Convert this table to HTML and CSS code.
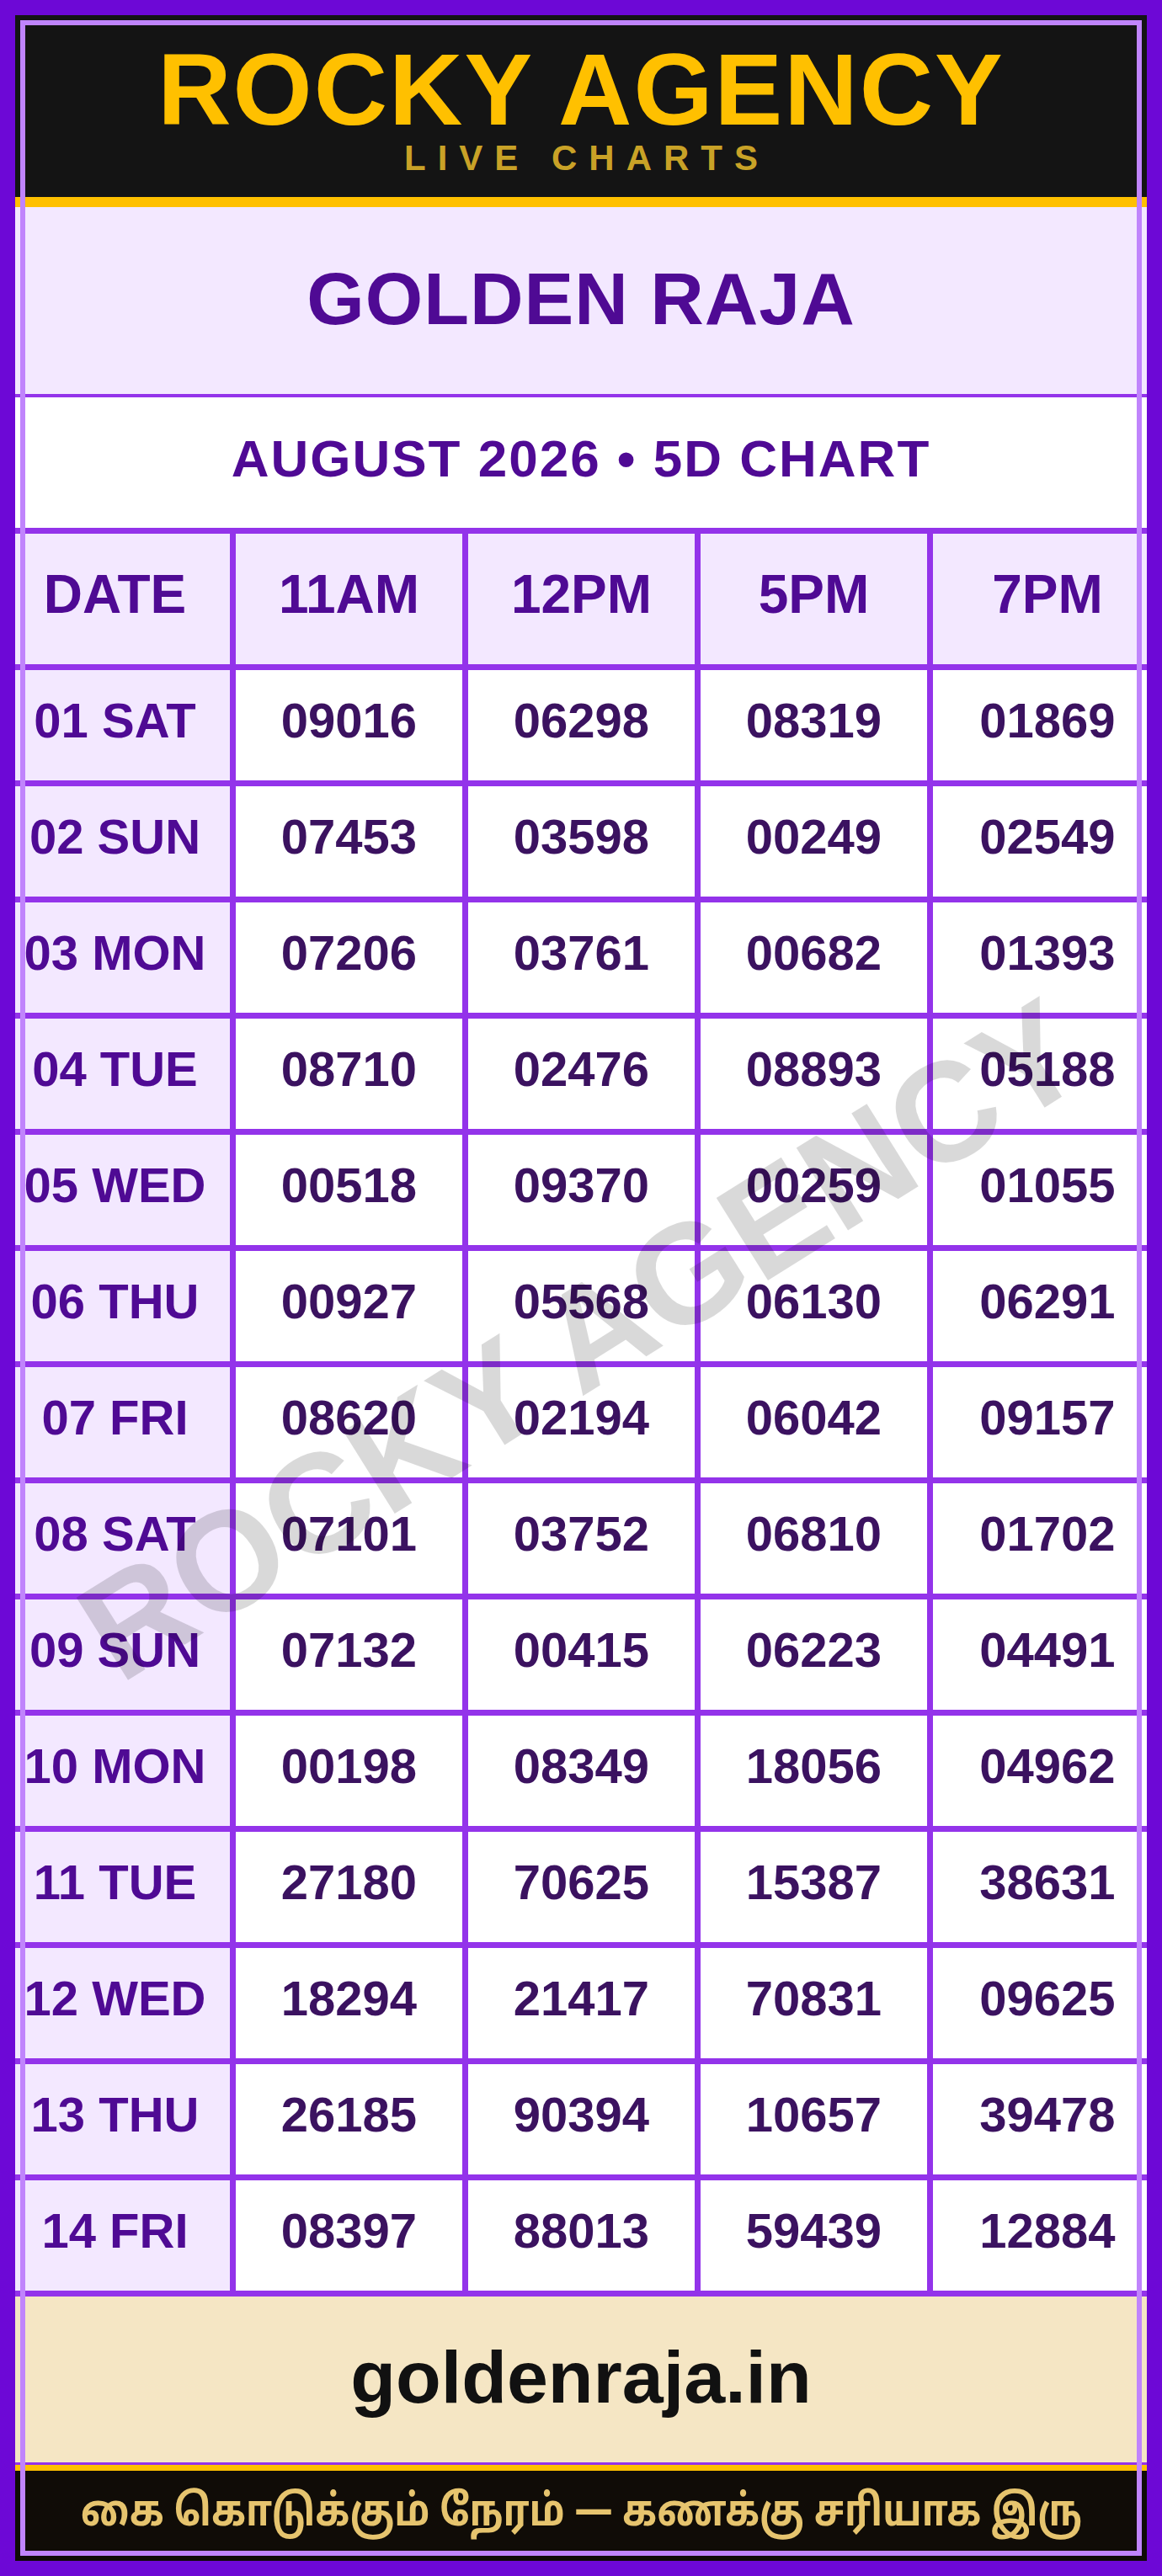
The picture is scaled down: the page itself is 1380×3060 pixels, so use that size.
FILE: index.html
```html
<!DOCTYPE html>
<html lang="ta">
<head>
    <meta charset="UTF-8">
    <meta name="viewport" content="width=device-width, initial-scale=1.0">
    <title>Golden Raja - August 2026 5D Chart</title>
    <link rel="stylesheet" href="styles.css">
</head>
<body>

    <div class="chart-card">
        <div class="brand-header">
            <div class="brand-name">ROCKY AGENCY</div>
            <div class="brand-tag">LIVE CHARTS</div>
        </div>

        <div class="game-title">GOLDEN RAJA</div>
        <div class="game-subtitle">AUGUST 2026 • 5D CHART</div>

        <div class="result-grid">
            <div class="cell head first">DATE</div>
            <div class="cell head">11AM</div>
            <div class="cell head">12PM</div>
            <div class="cell head">5PM</div>
            <div class="cell head last">7PM</div>

            <div class="cell day first">01 SAT</div><div class="cell">09016</div><div class="cell">06298</div><div class="cell">08319</div><div class="cell last">01869</div>
            <div class="cell day first">02 SUN</div><div class="cell">07453</div><div class="cell">03598</div><div class="cell">00249</div><div class="cell last">02549</div>
            <div class="cell day first">03 MON</div><div class="cell">07206</div><div class="cell">03761</div><div class="cell">00682</div><div class="cell last">01393</div>
            <div class="cell day first">04 TUE</div><div class="cell">08710</div><div class="cell">02476</div><div class="cell">08893</div><div class="cell last">05188</div>
            <div class="cell day first">05 WED</div><div class="cell">00518</div><div class="cell">09370</div><div class="cell">00259</div><div class="cell last">01055</div>
            <div class="cell day first">06 THU</div><div class="cell">00927</div><div class="cell">05568</div><div class="cell">06130</div><div class="cell last">06291</div>
            <div class="cell day first">07 FRI</div><div class="cell">08620</div><div class="cell">02194</div><div class="cell">06042</div><div class="cell last">09157</div>
            <div class="cell day first">08 SAT</div><div class="cell">07101</div><div class="cell">03752</div><div class="cell">06810</div><div class="cell last">01702</div>
            <div class="cell day first">09 SUN</div><div class="cell">07132</div><div class="cell">00415</div><div class="cell">06223</div><div class="cell last">04491</div>
            <div class="cell day first">10 MON</div><div class="cell">00198</div><div class="cell">08349</div><div class="cell">18056</div><div class="cell last">04962</div>
            <div class="cell day first">11 TUE</div><div class="cell">27180</div><div class="cell">70625</div><div class="cell">15387</div><div class="cell last">38631</div>
            <div class="cell day first">12 WED</div><div class="cell">18294</div><div class="cell">21417</div><div class="cell">70831</div><div class="cell last">09625</div>
            <div class="cell day first">13 THU</div><div class="cell">26185</div><div class="cell">90394</div><div class="cell">10657</div><div class="cell last">39478</div>
            <div class="cell day first">14 FRI</div><div class="cell">08397</div><div class="cell">88013</div><div class="cell">59439</div><div class="cell last">12884</div>
        </div>

        <div class="site-band">goldenraja.in</div>
        <div class="motto-band"><span class="motto-text">கை கொடுக்கும் நேரம் — கணக்கு சரியாக இரு</span></div>

        <!-- calque par-dessus le tableau -->
        <div class="watermark">ROCKY AGENCY</div>
        <div class="frame"></div>
    </div>

</body>
</html>
```

FILE: styles.css
```css
body {
    font-family: 'Liberation Sans', Arial, sans-serif;
    background: #6d08d6;
    margin: 0;
    padding: 18px;
}
.chart-card {
    position: relative;
    background-color: #141414;
    overflow: hidden;
}
.brand-header {
    height: 228px;
    box-sizing: border-box;
    padding-top: 28px;
    border-bottom: 12px solid #ffc000;
    text-align: center;
}
.brand-name {
    font-size: 121px;
    font-weight: bold;
    line-height: 1;
    letter-spacing: 2px;
    color: #ffc000;
}
.brand-tag {
    padding-left: 14px;
    font-size: 42px;
    font-weight: bold;
    line-height: 1;
    letter-spacing: 14px;
    color: #c9a227;
}
.game-title {
    height: 226px;
    box-sizing: border-box;
    padding-bottom: 4px;
    display: flex;
    justify-content: center;
    align-items: center;
    background: #f3e8ff;
    border-bottom: 4px solid #9333ea;
    font-size: 88px;
    font-weight: bold;
    line-height: 1;
    letter-spacing: 1px;
    color: #4f0a94;
}
.game-subtitle {
    height: 155px;
    box-sizing: border-box;
    padding-bottom: 10px;
    display: flex;
    justify-content: center;
    align-items: center;
    background: #fff;
    font-size: 62px;
    font-weight: bold;
    line-height: 1;
    letter-spacing: 2px;
    color: #4f0a94;
}
.result-grid {
    display: grid;
    grid-template-columns: 255px 269px 269px 269px 254px;
    grid-template-rows: 155px repeat(14, 131px);
    gap: 7px;
    padding: 7px 0;
    background: #9333ea;
}
.cell {
    display: flex;
    justify-content: center;
    align-items: center;
    padding-bottom: 12px;
    background: #fff;
    font-size: 58px;
    font-weight: bold;
    line-height: 1;
    color: #3b1260;
}
.cell.first {
    padding-right: 18px;
}
.cell.last {
    padding-left: 18px;
}
.cell.head {
    background: #f3e8ff;
    font-size: 64px;
    color: #4f0a94;
}
.cell.day {
    background: #f3e8ff;
    color: #4f0a94;
}
.site-band {
    height: 200px;
    box-sizing: border-box;
    padding-bottom: 6px;
    display: flex;
    justify-content: center;
    align-items: center;
    background: #f5e6c4;
    border-bottom: 3px solid #9333ea;
    font-size: 88px;
    font-weight: bold;
    line-height: 1;
    color: #111;
}
.motto-band {
    height: 114px;
    box-sizing: border-box;
    border-top: 7px solid #ffc000;
    padding-bottom: 4px;
    display: flex;
    justify-content: center;
    align-items: center;
    background: #100c07;
    font-family: 'Noto Sans Tamil', 'Noto Sans', 'Liberation Sans', sans-serif;
    font-size: 52px;
    font-weight: bold;
    line-height: 1;
    color: #e6c46e;
}
.motto-text {
    display: inline-block;
    white-space: nowrap;
    transform: scaleX(0.865);
}
.watermark {
    position: absolute;
    left: 50%;
    top: 1574px;
    transform: translate(-50%, -50%) rotate(-32deg);
    font-size: 168px;
    font-weight: bold;
    white-space: nowrap;
    color: rgba(0, 0, 0, 0.15);
    pointer-events: none;
}
.frame {
    position: absolute;
    top: 6px;
    left: 6px;
    right: 6px;
    bottom: 6px;
    border: 6px solid #c084fc;
    pointer-events: none;
}
```
